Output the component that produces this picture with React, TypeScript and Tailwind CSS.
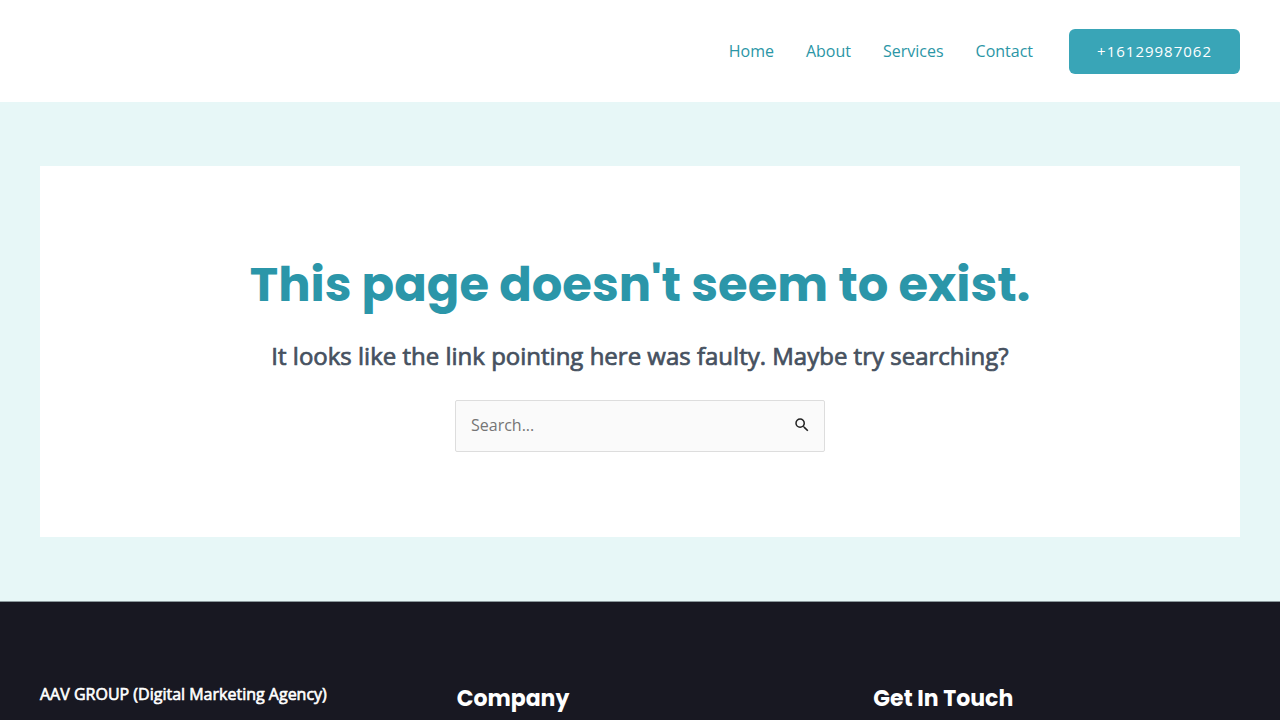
import { useState } from "react";
import { MdSearch } from "react-icons/md";

const NAV_LINKS = ["Home", "About", "Services", "Contact"];
const FOOTER_COLUMNS = ["Company", "Get In Touch"];

function Header() {
  return (
    <header className="bg-white">
      <div className="max-w-[1280px] mx-auto px-10 h-[102px] flex items-center justify-end">
        <nav className="flex gap-8 mr-9 text-base text-[#2b96a6]">
          {NAV_LINKS.map((link) => (
            <a key={link} href="#" className="hover:text-[#39a5b7]">
              {link}
            </a>
          ))}
        </nav>
        <a
          href="tel:+16129987062"
          className="px-7 py-3 rounded-md bg-[#39a5b7] text-white text-[15px] leading-[21px] tracking-[1px]"
        >
          +16129987062
        </a>
      </div>
    </header>
  );
}

function SearchForm() {
  const [query, setQuery] = useState("");

  return (
    <form
      role="search"
      onSubmit={(e) => e.preventDefault()}
      className="flex items-center w-full max-w-[370px] mx-auto border border-[#dddddd] rounded-xs bg-[#fafafa]"
    >
      <input
        type="search"
        aria-label="Search for"
        placeholder="Search..."
        value={query}
        onChange={(e) => setQuery(e.target.value)}
        className="flex-1 min-w-0 h-12 mb-0.5 px-[15px] text-base text-gray-700 placeholder:text-[#757575] focus:outline-none"
      />
      <button type="submit" aria-label="Search" className="h-12 mb-0.5 pr-[13px] pl-2 text-[#222222]">
        <MdSearch size={18} />
      </button>
    </form>
  );
}

export default function App() {
  return (
    <div className="min-h-screen flex flex-col font-['Open_Sans',sans-serif] bg-[#e7f7f7]">
      <Header />

      {/* 404 card */}
      <main className="w-full max-w-[1280px] mx-auto px-10 py-16">
        <section className="bg-white px-6 py-[85px] text-center">
          <h1 className="font-[Poppins,sans-serif] font-bold text-5xl leading-[68px] text-[#2b96a9]">
            This page doesn't seem to exist.
          </h1>
          <p className="mt-[18px] mb-[25px] text-2xl leading-[38px] text-[#465160] [-webkit-text-stroke:0.03em]">
            It looks like the link pointing here was faulty. Maybe try searching?
          </p>
          <SearchForm />
        </section>
      </main>

      {/* Footer */}
      <footer className="flex-1 bg-[#181822] border-t border-[#8b989c] text-white">
        <div className="max-w-[1280px] mx-auto px-10 pt-20 grid grid-cols-3 gap-[50px]">
          <p className="text-base leading-6 [-webkit-text-stroke:0.04em]">
            AAV GROUP (Digital Marketing Agency)
          </p>
          {FOOTER_COLUMNS.map((title) => (
            <h2
              key={title}
              className="font-[Poppins,sans-serif] font-bold text-[22px] leading-[34px]"
            >
              {title}
            </h2>
          ))}
        </div>
      </footer>
    </div>
  );
}
